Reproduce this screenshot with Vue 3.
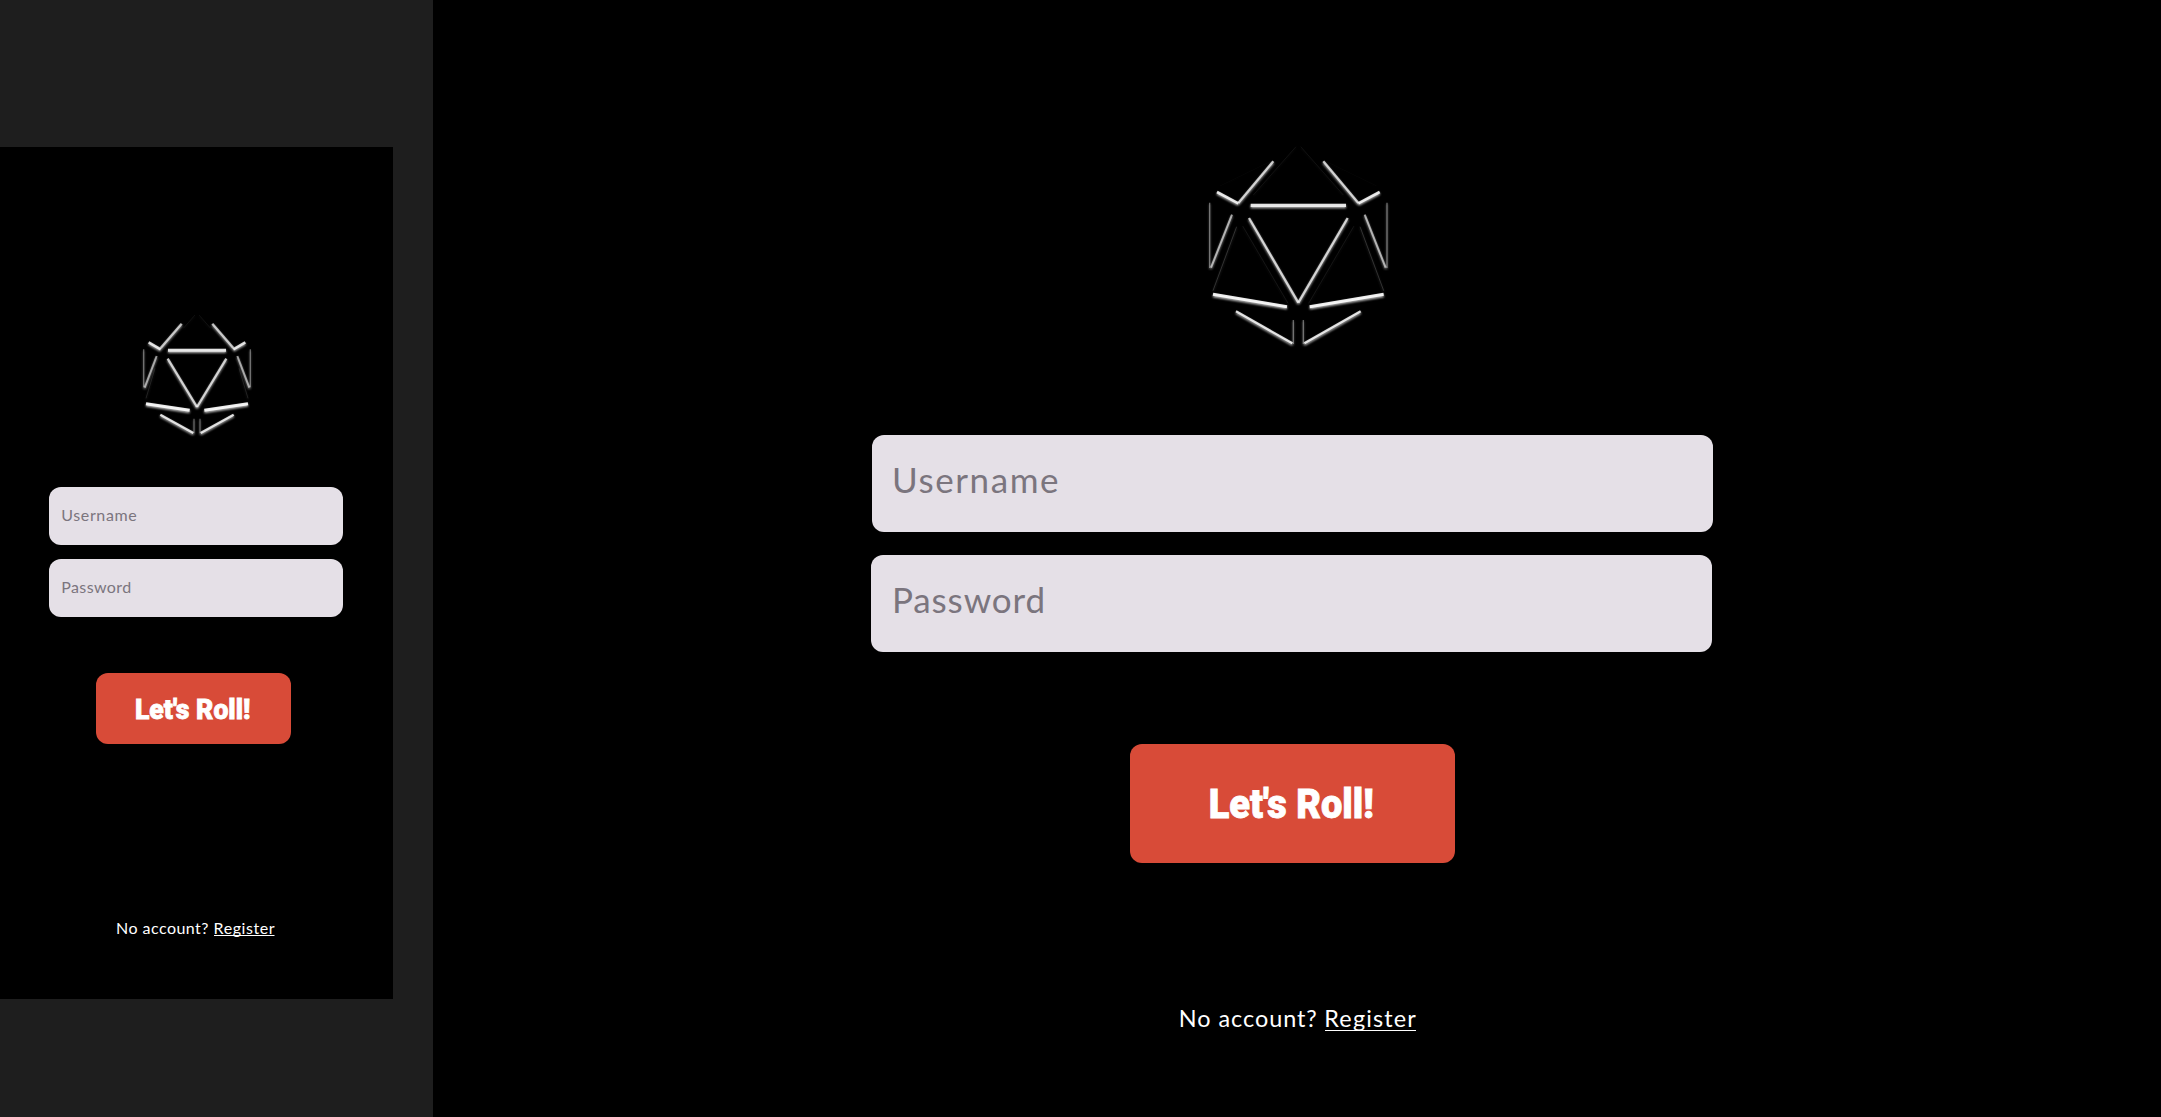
<script setup>
// Half of each die; every line is mirrored around the centre axis.
// [x1, y1, x2, y2, width, opacity]
const screens = [
  {
    name: 'mobile',
    icon: { w: 160, h: 150, cx: 231, bar: [144, 318, 150.5, 9] },
    lines: [
      [185, 71, 122, 144, 7, 0.75], [86, 127, 122, 148, 8, 0.9],
      [110, 168, 74, 263, 6, 0.6], [143, 176, 231, 321, 7, 0.8],
      [78, 311, 209, 331, 9, 1], [121, 344, 220, 399, 7, 0.9],
      [71, 148, 71, 262, 4, 0.4], [222, 356, 222, 400, 4, 0.35],
      [105, 205, 78, 295, 3, 0.12], [225, 45, 190, 85, 2, 0.1]
    ],
    fields: [
      { text: 'Username', w: 294, h: 58, x: 12.2, y: 33.6, len: 75.6 },
      { text: 'Password', w: 294, h: 58, x: 12.2, y: 33.6, len: 70 }
    ],
    button: { w: 195, h: 71, x: 38.9, y: 46.3, len: 115.4 },
    foot: { w: 165, h: 40, y: 23.6, x1: 0, len1: 92.5, x2: 97.6, len2: 61, u1: 98, u2: 158.5, uy: 25.5 }
  },
  {
    name: 'desktop',
    icon: { w: 220, h: 230, cx: 325, bar: [182, 468, 226, 10] },
    lines: [
      [250, 94, 145, 219, 7, 0.8], [81, 186, 145, 220, 8, 0.95],
      [126, 254, 63, 413, 6, 0.65], [177, 264, 325, 518, 7, 0.8],
      [69, 493, 291, 530, 9, 1], [138, 544, 307, 640, 7, 0.92],
      [59, 218, 59, 414, 4, 0.42], [310, 570, 310, 642, 4, 0.4],
      [140, 290, 69, 482, 3, 0.18], [158, 288, 294, 520, 2, 0.12],
      [318, 50, 190, 195, 2, 0.1], [90, 168, 240, 95, 2, 0.04]
    ],
    fields: [
      { text: 'Username', w: 840.6, h: 96.6, x: 20, y: 58.2, len: 166.5 },
      { text: 'Password', w: 840.6, h: 96.6, x: 21, y: 57.9, len: 153 }
    ],
    button: { w: 324.7, h: 118.4, x: 78.7, y: 74.4, len: 165 },
    foot: { w: 240, h: 60, y: 37.2, x1: -0.2, len1: 138, x2: 145.3, len2: 91.5, u1: 146, u2: 237, uy: 40.5 }
  }
]
</script>

<template>
  <main class="board">
    <section v-for="s in screens" :key="s.name" class="screen" :class="s.name">
      <svg class="die" :width="s.icon.w" :height="s.icon.h" :viewBox="`0 0 ${s.icon.w * 3} ${s.icon.h * 3}`">
        <defs>
          <filter :id="`edge-${s.name}`" filterUnits="userSpaceOnUse" x="0" y="0" width="660" height="690">
            <feGaussianBlur stdDeviation="1.7" />
          </filter>
          <filter :id="`fade-${s.name}`" filterUnits="userSpaceOnUse" x="0" y="0" width="660" height="690">
            <feGaussianBlur stdDeviation="3.6" />
          </filter>
          <g :id="`half-${s.name}`">
            <line
              v-for="(l, i) in s.lines" :key="i"
              :x1="l[0]" :y1="l[1]" :x2="l[2]" :y2="l[3]"
              :stroke-width="l[4]" :stroke-opacity="l[5]" stroke="#fff"
            />
          </g>
          <g :id="`die-${s.name}`">
            <use :href="`#half-${s.name}`" />
            <use :href="`#half-${s.name}`" :transform="`translate(${s.icon.cx * 2} 0) scale(-1 1)`" />
            <line
              :x1="s.icon.bar[0]" :x2="s.icon.bar[1]" :y1="s.icon.bar[2]" :y2="s.icon.bar[2]"
              :stroke-width="s.icon.bar[3]" stroke="#f2f2f2"
            />
          </g>
        </defs>
        <g :filter="`url(#fade-${s.name})`" opacity="0.75">
          <use :href="`#die-${s.name}`" y="4" />
        </g>
        <g :filter="`url(#edge-${s.name})`" opacity="0.92">
          <use :href="`#die-${s.name}`" />
        </g>
      </svg>

      <form class="form" @submit.prevent>
        <div v-for="f in s.fields" :key="f.text" class="field">
          <svg :width="f.w" :height="f.h">
            <text class="hint" :x="f.x" :y="f.y" :textLength="f.len">{{ f.text }}</text>
          </svg>
        </div>
        <button class="roll" type="submit">
          <svg :width="s.button.w" :height="s.button.h">
            <text :x="s.button.x" :y="s.button.y" :textLength="s.button.len" lengthAdjust="spacingAndGlyphs">Let's Roll!</text>
          </svg>
        </button>
      </form>

      <svg class="foot" :width="s.foot.w" :height="s.foot.h">
        <text :x="s.foot.x1" :y="s.foot.y" :textLength="s.foot.len1">No account?</text>
        <text :x="s.foot.x2" :y="s.foot.y" :textLength="s.foot.len2">Register</text>
        <line :x1="s.foot.u1" :x2="s.foot.u2" :y1="s.foot.uy" :y2="s.foot.uy" stroke="#fff" stroke-width="1" />
      </svg>
    </section>
  </main>
</template>

<style>
body {
  margin: 0;
  background: #1e1e1e;
}
</style>

<style scoped>
.board {
  display: flex;
  align-items: flex-start;
  gap: 40px;
  width: 2161px;
  height: 1117px;
  overflow: hidden;
  background: #1e1e1e;
  font-family: Lato, "Open Sans", sans-serif;
}
.screen {
  display: flex;
  flex: none;
  flex-direction: column;
  align-items: flex-start;
  box-sizing: border-box;
  background: #000;
}
svg {
  display: block;
  overflow: visible;
}
.form {
  display: flex;
  flex-direction: column;
  align-items: flex-start;
}
.field {
  border-radius: 12px;
  background: #e5e0e7;
}
.hint {
  fill: #7b757e;
}
.roll {
  padding: 0;
  border: 0;
  border-radius: 12px;
  background: #d84b38;
  font-family: Roboto, "Open Sans", sans-serif;
  font-weight: 900;
}
.roll text {
  fill: #fff;
  stroke: #fff;
  stroke-width: 0.8px;
}
.foot text {
  fill: #fff;
}

.mobile {
  width: 393px;
  height: 852px;
  margin-top: 147px;
  padding-top: 153px;
}
.mobile .die {
  margin-left: 120px;
}
.mobile .form {
  gap: 14px;
  margin: 37px 0 0 49px;
}
.mobile .hint,
.mobile .foot {
  font-size: 16px;
}
.mobile .roll {
  margin: 42px 0 0 47px;
  font-size: 28px;
}
.mobile .foot {
  margin: 166px 0 0 116px;
}

.desktop {
  width: 1728px;
  height: 1117px;
  padding-top: 130px;
}
.desktop .die {
  margin-left: 757px;
}
.desktop .form {
  gap: 23.4px;
  margin: 75px 0 0 439.4px;
}
.desktop .hint {
  font-size: 35px;
}
.desktop .field + .field {
  margin-left: -1.4px;
}
.desktop .roll {
  margin: 69.3px 0 0 257.9px;
  font-size: 40px;
}
.desktop .foot {
  margin: 127.3px 0 0 745.5px;
  font-size: 23.4px;
}
</style>
